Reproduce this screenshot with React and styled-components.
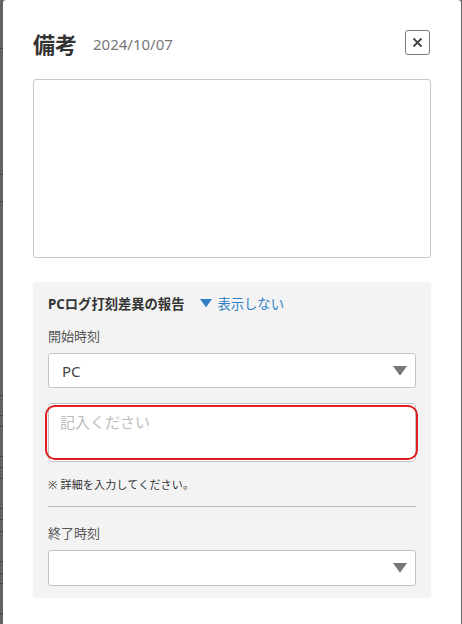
import styled, { createGlobalStyle } from "styled-components";

const GlobalStyle = createGlobalStyle`
  html, body {
    margin: 0;
    padding: 0;
    background: #636363;
  }
  * {
    box-sizing: border-box;
  }
`;

function Caret({ color, size }) {
  return (
    <svg width={size} height={size * 0.7} viewBox="0 0 10 7">
      <path d="M0 0 H10 L5 7 Z" fill={color} />
    </svg>
  );
}

function Select({ value, tall }) {
  return (
    <SelectBox $tall={tall}>
      <span>{value}</span>
      <Caret color="#777" size={14} />
    </SelectBox>
  );
}

function App() {
  return (
    <Page>
      <GlobalStyle />
      <Backdrop>
        {[48, 174, 201, 395, 415, 426, 456, 467, 478, 508, 519, 531, 561, 573, 583, 613].map((y) => (
          <Rule key={y} style={{ top: y }} />
        ))}
      </Backdrop>
      <Modal>
        <Header>
          <Title>備考</Title>
          <DateText>2024/10/07</DateText>
          <CloseButton>
            <svg width="11" height="11" viewBox="0 0 11 11">
              <path d="M1.5 1.5 L9.5 9.5 M9.5 1.5 L1.5 9.5" stroke="#444" strokeWidth="1.8" />
            </svg>
          </CloseButton>
        </Header>
        <MemoArea />
        <Section>
          <SectionHead>
            <SectionTitle>PCログ打刻差異の報告</SectionTitle>
            <Toggle>
              <Caret color="#2f7fc6" size={12} />
              表示しない
            </Toggle>
          </SectionHead>
          <Label>開始時刻</Label>
          <Select value="PC" />
          <DetailInput>
            <span>記入ください</span>
          </DetailInput>
          <Note>※ 詳細を入力してください。</Note>
          <Divider />
          <Label $after>終了時刻</Label>
          <Select value="" tall />
        </Section>
      </Modal>
    </Page>
  );
}

const Page = styled.div`
  display: flex;
  width: 462px;
  height: 624px;
  overflow: hidden;
  position: relative;
  font-family: "Noto Sans", "Noto Sans CJK JP", sans-serif;
`;

const Backdrop = styled.div`
  position: relative;
  width: 3px;
  flex-shrink: 0;
  background: #636363;
`;

const Rule = styled.div`
  position: absolute;
  left: 0;
  width: 3px;
  height: 1px;
  background: #3e4650;
`;

const Modal = styled.div`
  width: 458px;
  height: 624px;
  background: #ffffff;
  border-radius: 3px 3px 0 0;
  padding: 30px 30px 0 30px;
  display: flex;
  flex-direction: column;
`;

const Header = styled.div`
  display: flex;
  align-items: center;
  height: 25px;
`;

const Title = styled.h1`
  margin: 0;
  font-size: 22px;
  font-weight: 700;
  color: #333;
  line-height: 25px;
  position: relative;
  top: 2px;
`;

const DateText = styled.span`
  margin-left: 16px;
  font-size: 15px;
  color: #777;
  line-height: 25px;
  position: relative;
  top: 2px;
`;

const CloseButton = styled.button`
  margin-left: auto;
  margin-right: 1px;
  width: 25px;
  height: 25px;
  border: 1px solid #7a7a7a;
  border-radius: 3px;
  background: #fff;
  display: flex;
  align-items: center;
  justify-content: center;
  padding: 0;
`;

const MemoArea = styled.div`
  margin-top: 24px;
  height: 179px;
  border: 1px solid #c8c8c8;
  border-radius: 3px;
`;

const Section = styled.div`
  margin-top: 24px;
  background: #f3f3f3;
  border-radius: 4px;
  padding: 11px 15px 12px 15px;
  display: flex;
  flex-direction: column;
`;

const SectionHead = styled.div`
  display: flex;
  align-items: center;
  height: 20px;
`;

const SectionTitle = styled.span`
  font-size: 13.3px;
  font-weight: 700;
  color: #333;
`;

const Toggle = styled.span`
  margin-left: 16px;
  display: flex;
  align-items: center;
  gap: 5px;
  font-size: 13.3px;
  color: #2f7fc6;
`;

const Label = styled.div`
  margin-top: ${(p) => (p.$after ? "17px" : "14px")};
  font-size: 13px;
  line-height: 18px;
  color: #555;
`;

const SelectBox = styled.div`
  margin-top: 8px;
  height: ${(p) => (p.$tall ? "36px" : "35px")};
  background: #fff;
  border: 1px solid #c4c4c4;
  border-radius: 3px;
  display: flex;
  align-items: center;
  justify-content: space-between;
  padding: 0 8px 0 13px;
  span {
    font-size: 15px;
    font-weight: 400;
    color: #444;
  }
`;

const DetailInput = styled.div`
  position: relative;
  margin-top: 15px;
  height: 59px;
  background: #fff;
  border: 1px solid #c4c4c4;
  border-radius: 4px;
  padding: 7px 11px;
  span {
    font-size: 15px;
    color: #bdbdbd;
  }
  &::after {
    content: "";
    position: absolute;
    left: -4px;
    right: -3px;
    top: 1px;
    bottom: 1px;
    border: 2px solid #e01e1e;
    border-radius: 10px;
  }
`;

const Note = styled.div`
  margin-top: 14px;
  font-size: 11px;
  line-height: 18px;
  letter-spacing: 0.2px;
  color: #333;
`;

const Divider = styled.div`
  margin-top: 12px;
  height: 1px;
  background: #bcbcbc;
`;

export default App;
